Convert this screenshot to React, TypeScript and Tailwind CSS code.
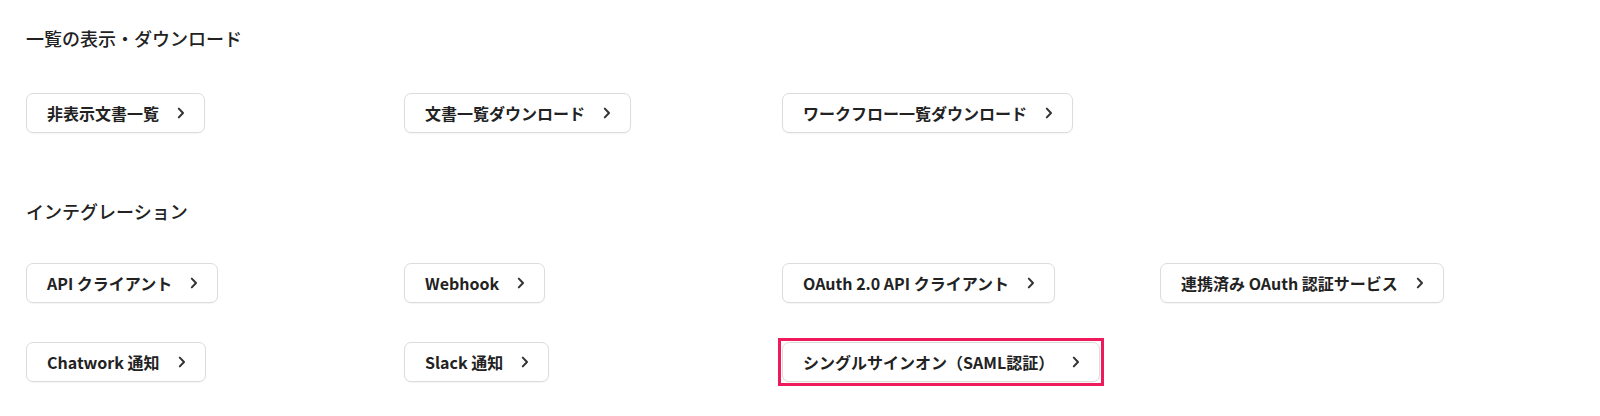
import React from "react";

const Chevron = () => (
  <svg width="8" height="12" viewBox="0 0 8 12" fill="none" className="shrink-0">
    <path d="M1.8 1.6 L6 6 L1.8 10.4" stroke="#333333" strokeWidth="2" strokeLinecap="round" strokeLinejoin="round" />
  </svg>
);

const Btn = ({ label, highlight }: { label: string; highlight?: boolean }) => (
  <div className="flex">
    <div className="relative">
      <button className="inline-flex h-[40px] items-center gap-[18px] rounded-[7px] border border-[#dcdcdc] bg-white pl-[20px] pr-[19px] text-[16px] font-bold leading-none text-[#222222] shadow-[0_1px_1px_rgba(0,0,0,0.04)]">
        <span className="whitespace-nowrap">{label}</span>
        <Chevron />
      </button>
      {highlight && (
        <span className="pointer-events-none absolute -inset-[4px] border-[3px] border-[#ef1a5c]" />
      )}
    </div>
  </div>
);

export default function App() {
  return (
    <div
      className="min-h-[416px] w-full bg-white pl-[26px] pt-[25px] text-[#222222]"
      style={{ fontFamily: '"Noto Sans CJK JP", "Noto Sans", sans-serif' }}
    >
      <h2 className="h-[27px] text-[18px] font-medium leading-[27px]">一覧の表示・ダウンロード</h2>
      <div className="mt-[41px] grid grid-cols-[378px_378px_378px_378px]">
        <Btn label="非表示文書一覧" />
        <Btn label="文書一覧ダウンロード" />
        <Btn label="ワークフロー一覧ダウンロード" />
      </div>

      <h2 className="mt-[65px] h-[27px] text-[18px] font-medium leading-[27px]">インテグレーション</h2>
      <div className="mt-[38px] grid grid-cols-[378px_378px_378px_378px] gap-y-[39px]">
        <Btn label="API クライアント" />
        <Btn label="Webhook" />
        <Btn label="OAuth 2.0 API クライアント" />
        <Btn label="連携済み OAuth 認証サービス" />
        <Btn label="Chatwork 通知" />
        <Btn label="Slack 通知" />
        <Btn label="シングルサインオン（SAML認証）" highlight />
      </div>
    </div>
  );
}
